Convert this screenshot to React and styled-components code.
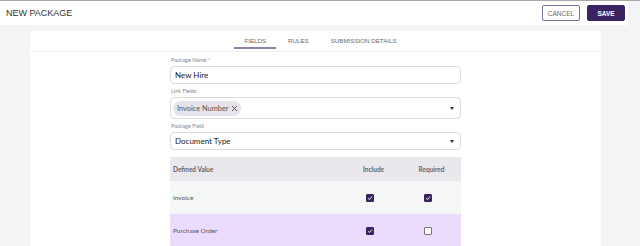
import React from 'react';
import styled, { createGlobalStyle } from 'styled-components';

const GlobalStyle = createGlobalStyle`
  html, body {
    margin: 0;
    padding: 0;
    background: #f4f4f6;
    font-family: Lato, "Liberation Sans", sans-serif;
  }
  * { box-sizing: border-box; }
`;

const tabs = ['Fields', 'Rules', 'Submission Details'];

const rows = [
  { name: 'Invoice', include: true, required: true, bg: '#f5f6f6' },
  { name: 'Purchase Order', include: true, required: false, bg: '#ebdbfc' },
];

function Check({ checked }) {
  return (
    <Box checked={checked}>
      {checked && (
        <svg width="6" height="6" viewBox="0 0 12 12">
          <path d="M2 6.5 L5 9 L10 3" fill="none" stroke="#fff" strokeWidth="1.8" />
        </svg>
      )}
    </Box>
  );
}

function App() {
  return (
    <Page>
      <GlobalStyle />
      <Header>
        <Title>New Package</Title>
        <Actions>
          <Button>Cancel</Button>
          <Button primary>Save</Button>
        </Actions>
      </Header>
      <Body>
        <Card>
          <Tabs>
            {tabs.map((t, i) => (
              <Tab key={t} active={i === 0}>{t}</Tab>
            ))}
          </Tabs>
          <Form>
            <Label>Package Name *</Label>
            <Input>New Hire</Input>
            <Label>Link Fields</Label>
            <Select tall>
              <Chip>
                Invoice Number
                <svg width="7" height="7" viewBox="0 0 10 10">
                  <path d="M1.5 1.5 L8.5 8.5 M8.5 1.5 L1.5 8.5" stroke="#555" strokeWidth="1.4" />
                </svg>
              </Chip>
              <Caret />
            </Select>
            <Label>Package Field</Label>
            <Select>
              <Value>Document Type</Value>
              <Caret />
            </Select>
            <Table>
              <HeadRow>
                <HeadCell>Defined Value</HeadCell>
                <HeadCell center>Include</HeadCell>
                <HeadCell center>Required</HeadCell>
              </HeadRow>
              {rows.map(r => (
                <Row key={r.name} bg={r.bg}>
                  <Cell>{r.name}</Cell>
                  <Cell center><Check checked={r.include} /></Cell>
                  <Cell center><Check checked={r.required} /></Cell>
                </Row>
              ))}
            </Table>
          </Form>
        </Card>
      </Body>
    </Page>
  );
}

const Page = styled.div`
  width: 640px;
  height: 246px;
  overflow: hidden;
  border-top: 1px solid #a9a9a9;
`;

const Header = styled.header`
  height: 24px;
  margin-right: 12px;
  background: #fff;
  display: flex;
  align-items: center;
  justify-content: space-between;
  padding: 0 3px 0 6px;
`;

const Title = styled.h1`
  margin: 0;
  font-size: 9px;
  font-weight: 400;
  text-transform: uppercase;
  color: #333;
  font-family: "Liberation Sans", Arial, sans-serif;
`;

const Actions = styled.div`
  display: flex;
  gap: 7px;
`;

const Button = styled.button`
  width: 38px;
  height: 16px;
  padding: 0;
  border-radius: 2px;
  border: 1px solid ${p => (p.primary ? '#3b2361' : '#7d6b9c')};
  background: ${p => (p.primary ? '#3b2361' : '#fff')};
  color: ${p => (p.primary ? '#fff' : '#666')};
  font-family: "Liberation Sans", Arial, sans-serif;
  font-size: 6.5px;
  font-weight: ${p => (p.primary ? 700 : 400)};
  text-transform: uppercase;
`;

const Body = styled.main`
  padding: 6px 39px 0 30px;
`;

const Card = styled.section`
  background: #fff;
  border-radius: 3px 3px 0 0;
  height: 220px;
`;

const Tabs = styled.nav`
  height: 21px;
  display: flex;
  justify-content: center;
  gap: 2px;
  padding-left: 10px;
  border-bottom: 1px solid #efefef;
`;

const Tab = styled.div`
  padding: 6px 10px 0;
  font-family: "Liberation Sans", Arial, sans-serif;
  font-size: 6.2px;
  text-transform: uppercase;
  color: #6a6a6a;
  border-bottom: 2px solid ${p => (p.active ? '#8e80ab' : 'transparent')};
  height: 18px;
`;

const Form = styled.div`
  width: 291px;
  margin: 0 auto;
  padding: 4px 0 0 0;
`;

const Label = styled.div`
  font-size: 5.5px;
  color: #888;
  height: 9px;
  line-height: 9px;
  margin: 0 0 1px 1px;
`;

const Input = styled.div`
  height: 18px;
  border: 1px solid #ddd;
  border-radius: 4px;
  padding: 0 4px;
  display: flex;
  align-items: center;
  font-size: 8px;
  color: #222;
  margin-bottom: 3px;
`;

const Select = styled(Input)`
  height: ${p => (p.tall ? '22px' : '18px')};
  justify-content: space-between;
  padding: 0 6px 0 2px;
  margin-bottom: ${p => (p.tall ? '3px' : '7px')};
`;

const Value = styled.span`
  padding-left: 2px;
`;

const Chip = styled.span`
  display: inline-flex;
  align-items: center;
  gap: 2px;
  height: 15px;
  padding: 0 3px 0 4px;
  border-radius: 8px;
  background: #e7e3ea;
  color: #555;
  font-size: 7.4px;
`;

const Caret = styled.span`
  width: 0;
  height: 0;
  border-left: 2px solid transparent;
  border-right: 2px solid transparent;
  border-top: 3px solid #333;
`;

const Table = styled.div`
  display: flex;
  flex-direction: column;
`;

const HeadRow = styled.div`
  display: grid;
  grid-template-columns: 1fr 50px 66px;
  height: 24px;
  background: #ebe8ed;
  align-items: center;
`;

const Row = styled(HeadRow)`
  height: 33px;
  background: ${p => p.bg};
`;

const HeadCell = styled.div`
  font-size: 6.5px;
  font-weight: 700;
  color: #666;
  padding-left: ${p => (p.center ? '7px' : '3px')};
  text-align: ${p => (p.center ? 'center' : 'left')};
`;

const Cell = styled.div`
  font-size: 6.5px;
  color: #555;
  padding-left: ${p => (p.center ? 0 : '3px')};
  display: flex;
  justify-content: ${p => (p.center ? 'center' : 'flex-start')};
`;

const Box = styled.span`
  width: 8px;
  height: 8px;
  border-radius: 1px;
  display: flex;
  align-items: center;
  justify-content: center;
  background: ${p => (p.checked ? '#3b2361' : '#fff')};
  border: 1px solid ${p => (p.checked ? '#3b2361' : '#777')};
`;

export default App;
